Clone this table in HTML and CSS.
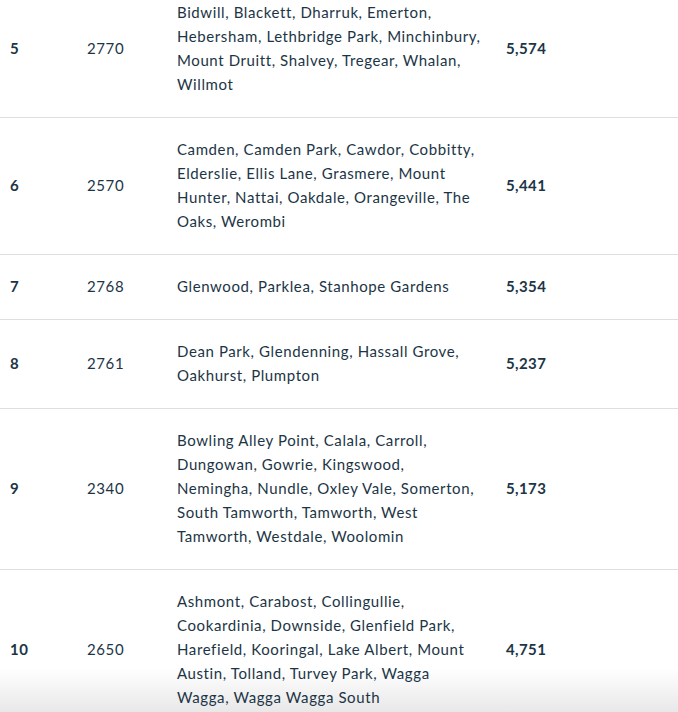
FILE: index.html
```html
<!DOCTYPE html>
<html lang="en">
<head>
<meta charset="utf-8">
<title>Postcodes</title>
<link rel="stylesheet" href="styles.css">
</head>
<body>
<div class="scroller">
<table class="ranking">
  <tbody>
    <tr>
      <td class="rank">5</td>
      <td class="code">2770</td>
      <td class="suburbs">Bidwill, Blackett, Dharruk, Emerton, Hebersham, Lethbridge Park, Minchinbury, Mount Druitt, Shalvey, Tregear, Whalan, Willmot</td>
      <td class="count">5,574</td>
    </tr>
    <tr>
      <td class="rank">6</td>
      <td class="code">2570</td>
      <td class="suburbs">Camden, Camden Park, Cawdor, Cobbitty, Elderslie, Ellis Lane, Grasmere, Mount Hunter, Nattai, Oakdale, Orangeville, The Oaks, Werombi</td>
      <td class="count">5,441</td>
    </tr>
    <tr>
      <td class="rank">7</td>
      <td class="code">2768</td>
      <td class="suburbs">Glenwood, Parklea, Stanhope Gardens</td>
      <td class="count">5,354</td>
    </tr>
    <tr>
      <td class="rank">8</td>
      <td class="code">2761</td>
      <td class="suburbs">Dean Park, Glendenning, Hassall Grove, Oakhurst, Plumpton</td>
      <td class="count">5,237</td>
    </tr>
    <tr>
      <td class="rank">9</td>
      <td class="code">2340</td>
      <td class="suburbs">Bowling Alley Point, Calala, Carroll, Dungowan, Gowrie, Kingswood, Nemingha, Nundle, Oxley Vale, Somerton, South Tamworth, Tamworth, West Tamworth, Westdale, Woolomin</td>
      <td class="count">5,173</td>
    </tr>
    <tr>
      <td class="rank">10</td>
      <td class="code">2650</td>
      <td class="suburbs">Ashmont, Carabost, Collingullie, Cookardinia, Downside, Glenfield Park, Harefield, Kooringal, Lake Albert, Mount Austin, Tolland, Turvey Park, Wagga Wagga, Wagga Wagga South</td>
      <td class="count">4,751</td>
    </tr>
  </tbody>
</table>
</div>
</body>
</html>
```

FILE: styles.css
```css
html {
  margin: 0;
  padding: 0;
  height: 712px;
  background-color: #ffffff;
  background-image: linear-gradient(to bottom, rgba(234,234,234,0), rgba(232,232,232,1));
  background-repeat: no-repeat;
  background-position: left bottom;
  background-size: 100% 44px;
  background-attachment: fixed;
}
body {
  margin: 0;
  padding: 0;
  font-family: "Lato", "Open Sans", sans-serif;
  font-size: 15px;
  line-height: 24px;
  letter-spacing: 0.6px;
  color: #1c3546;
  overflow: hidden;
  height: 712px;
}
.scroller {
  margin-top: -19px;
}
.ranking {
  width: 100%;
  border-collapse: collapse;
}
.ranking td {
  padding: 19px 10px 21px;
  vertical-align: middle;
  text-align: left;
  border-bottom: 1px solid #dedede;
}
.rank {
  width: 57px;
  font-weight: 700;
}
.code {
  width: 70px;
}
.ranking .suburbs {
  width: 305px;
  padding-right: 14px;
}
.count {
  font-weight: 700;
  letter-spacing: 0.4px;
}
```
